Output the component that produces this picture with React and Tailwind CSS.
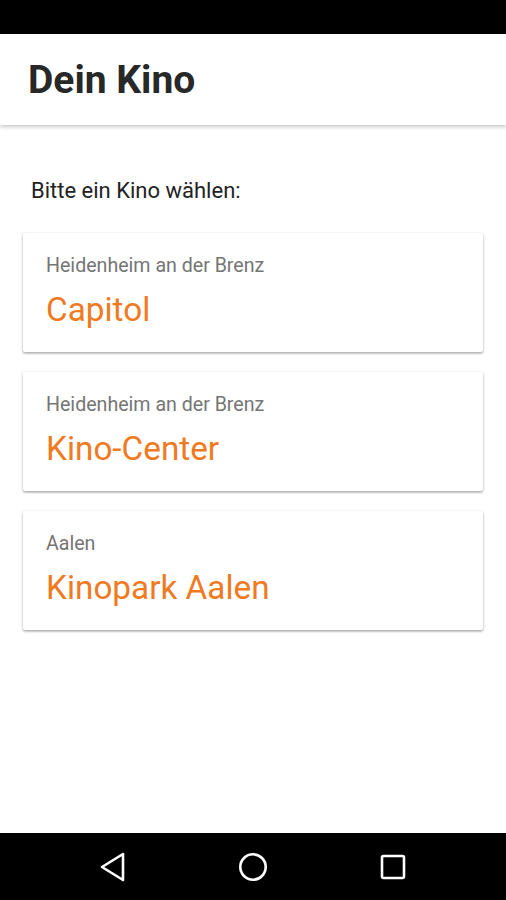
import React from "react";

const cinemas = [
  { city: "Heidenheim an der Brenz", name: "Capitol" },
  { city: "Heidenheim an der Brenz", name: "Kino-Center" },
  { city: "Aalen", name: "Kinopark Aalen" },
];

export default function App() {
  return (
    <div
      className="flex h-[900px] w-[506px] flex-col overflow-hidden bg-white"
      style={{ fontFamily: "Roboto, 'Noto Sans', sans-serif" }}
    >
      <div className="h-[34px] shrink-0 bg-black" />
      <header className="relative z-10 h-[91px] shrink-0 bg-white pl-[28px] pt-[23px] shadow-[0_2px_4px_rgba(0,0,0,0.22)]">
        <h1 className="text-[39px] font-bold leading-[46px] text-[#282828]">Dein Kino</h1>
      </header>
      <main className="flex flex-1 flex-col bg-white pt-[52px]">
        <p className="pl-[31px] text-[22px] leading-[28px] text-[#222]">Bitte ein Kino wählen:</p>
        <div className="mt-[28px] flex flex-col gap-[20px] px-[23px]">
          {cinemas.map((c) => (
            <div
              key={c.name}
              className="h-[119px] rounded-[2px] bg-white pl-[23px] pt-[21px] shadow-[0_1px_3px_rgba(0,0,0,0.28),0_2px_2px_rgba(0,0,0,0.12)]"
            >
              <div className="text-[19.6px] leading-[24px] text-[#757575]">{c.city}</div>
              <div className="mt-[12px] text-[33.3px] leading-[40px] text-[#ef7a1f]">{c.name}</div>
            </div>
          ))}
        </div>
      </main>
      <nav className="flex h-[67px] shrink-0 items-center justify-center bg-black">
        <div className="flex w-[140px] justify-center">
          <svg width="28" height="32" viewBox="0 0 28 32">
            <path d="M24 3 L3 16 L24 29 Z" fill="none" stroke="white" strokeWidth="2.6" strokeLinejoin="round" />
          </svg>
        </div>
        <div className="flex w-[140px] justify-center">
          <svg width="30" height="30" viewBox="0 0 30 30">
            <circle cx="15" cy="15" r="12.7" fill="none" stroke="white" strokeWidth="2.6" />
          </svg>
        </div>
        <div className="flex w-[140px] justify-center">
          <svg width="28" height="28" viewBox="0 0 28 28">
            <rect x="3" y="3" width="22" height="22" rx="1.5" fill="none" stroke="white" strokeWidth="2.6" />
          </svg>
        </div>
      </nav>
    </div>
  );
}
